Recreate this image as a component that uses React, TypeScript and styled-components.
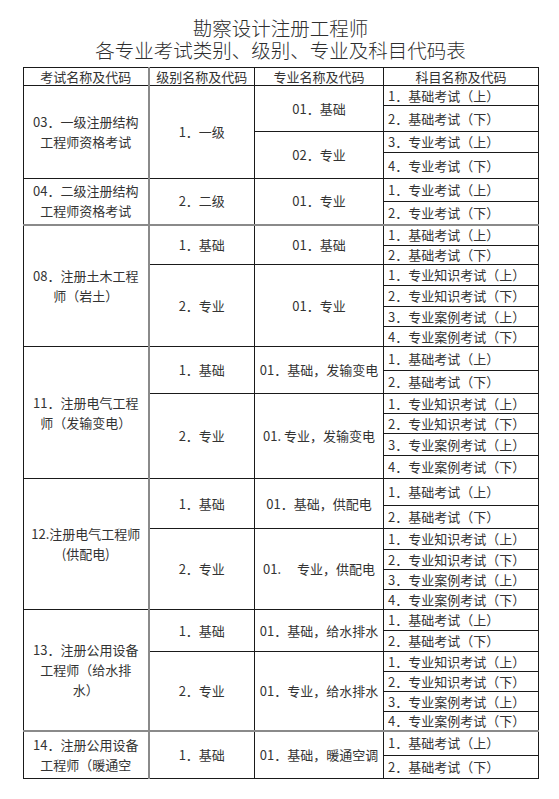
import React from "react";
import styled, { createGlobalStyle } from "styled-components";

const GlobalStyle = createGlobalStyle`
  html, body {
    margin: 0;
    padding: 0;
    background: #ffffff;
  }
  body {
    font-family: "Noto Sans CJK SC", "Noto Sans", sans-serif;
    color: #333333;
  }
`;

const Page = styled.div`
  width: 559px;
  box-sizing: border-box;
  padding: 17px 0 20px 23px;
`;

const Title = styled.h1`
  margin: 0 0 6px 0;
  width: 515px;
  text-align: center;
  font-family: "Noto Sans CJK SC", sans-serif;
  font-weight: 300;
  font-size: 19.5px;
  line-height: 22px;
  color: #2e2e2e;
`;

const TitleLine = styled.span`
  display: block;
  white-space: nowrap;
`;

const Table = styled.table`
  width: 515px;
  table-layout: fixed;
  border-collapse: collapse;
  font-family: "Noto Sans CJK SC", sans-serif;
  font-size: 13px;
  color: #333333;
`;

const Col = styled.col<{ $w: number }>`
  width: ${(p) => p.$w}px;
`;

const HeadRow = styled.tr`
  height: 18px;
`;

const HeadCell = styled.th<{ $sep?: boolean }>`
  font-weight: normal;
  font-size: 13px;
  line-height: 16px;
  padding: 0;
  text-align: center;
  white-space: nowrap;
  border: 1px solid #1a1a1a;
  ${(p) => (p.$sep ? "border-right: 2px solid #8a8a8a;" : "")}
`;

const Row = styled.tr<{ $h: number; $heavy?: boolean }>`
  height: ${(p) => p.$h}px;
  ${(p) => (p.$heavy ? "& > td { border-top: 2px solid #8a8a8a; }" : "")}
`;

const Cell = styled.td`
  border: 1px solid #1a1a1a;
  padding: 0 2px;
  white-space: nowrap;
  overflow: hidden;
  vertical-align: middle;
  line-height: 20px;
`;

const ExamCell = styled(Cell)`
  text-align: center;
  border-right: 2px solid #8a8a8a;
`;

const LevelCell = styled(Cell)`
  text-align: center;
`;

const MajorCell = styled(Cell)`
  text-align: center;
`;

const SubjectCell = styled(Cell)`
  text-align: left;
  padding-left: 4px;
  line-height: 18px;
`;

const ExamLine = styled.span`
  display: block;
`;

type Subject = { text: string; h: number };
type Major = { name: string; subjects: Subject[] };
type Level = { name: string; majors: Major[] };
type Group = { exam: string[]; levels: Level[]; heavyTop?: boolean };

const basic = (h1: number, h2: number): Subject[] => [
  { text: "1．基础考试（上）", h: h1 },
  { text: "2．基础考试（下）", h: h2 },
];

const prof = (a: number, b: number, c: number, d: number): Subject[] => [
  { text: "1．专业知识考试（上）", h: a },
  { text: "2．专业知识考试（下）", h: b },
  { text: "3．专业案例考试（上）", h: c },
  { text: "4．专业案例考试（下）", h: d },
];

const groups: Group[] = [
  {
    exam: ["03．一级注册结构", "工程师资格考试"],
    levels: [
      {
        name: "1．一级",
        majors: [
          { name: "01．基础", subjects: basic(20, 26) },
          {
            name: "02．专业",
            subjects: [
              { text: "3．专业考试（上）", h: 21 },
              { text: "4．专业考试（下）", h: 26 },
            ],
          },
        ],
      },
    ],
  },
  {
    exam: ["04．二级注册结构", "工程师资格考试"],
    levels: [
      {
        name: "2．二级",
        majors: [
          {
            name: "01．专业",
            subjects: [
              { text: "1．专业考试（上）", h: 23 },
              { text: "2．专业考试（下）", h: 23 },
            ],
          },
        ],
      },
    ],
  },
  {
    exam: ["08．注册土木工程", "师（岩土）"],
    heavyTop: true,
    levels: [
      { name: "1．基础", majors: [{ name: "01．基础", subjects: basic(21, 19) }] },
      { name: "2．专业", majors: [{ name: "01．专业", subjects: prof(21, 21, 20, 20) }] },
    ],
  },
  {
    exam: ["11．注册电气工程", "师（发输变电）"],
    levels: [
      { name: "1．基础", majors: [{ name: "01．基础，发输变电", subjects: basic(24, 23) }] },
      { name: "2．专业", majors: [{ name: "01.  专业，发输变电", subjects: prof(20, 20, 22, 23) }] },
    ],
  },
  {
    exam: ["12.注册电气工程师", "(供配电)"],
    levels: [
      { name: "1．基础", majors: [{ name: "01．基础，供配电", subjects: basic(27, 23) }] },
      { name: "2．专业", majors: [{ name: "01.　 专业，供配电", subjects: prof(21, 20, 20, 20) }] },
    ],
  },
  {
    exam: ["13．注册公用设备", "工程师（给水排", "水）"],
    levels: [
      { name: "1．基础", majors: [{ name: "01．基础，给水排水", subjects: basic(21, 21) }] },
      { name: "2．专业", majors: [{ name: "01．专业，给水排水", subjects: prof(20, 20, 20, 19) }] },
    ],
  },
  {
    exam: ["14．注册公用设备", "工程师（暖通空"],
    heavyTop: true,
    levels: [
      { name: "1．基础", majors: [{ name: "01．基础，暖通空调", subjects: basic(24, 23) }] },
    ],
  },
];

const countLevel = (l: Level) => l.majors.reduce((n, m) => n + m.subjects.length, 0);
const countGroup = (g: Group) => g.levels.reduce((n, l) => n + countLevel(l), 0);

function buildRows(): React.ReactNode[] {
  const rows: React.ReactNode[] = [];
  groups.forEach((g, gi) => {
    let firstInGroup = true;
    g.levels.forEach((l, li) => {
      let firstInLevel = true;
      l.majors.forEach((m, mi) => {
        m.subjects.forEach((s, si) => {
          rows.push(
            <Row key={`${gi}-${li}-${mi}-${si}`} $h={s.h} $heavy={firstInGroup && g.heavyTop}>
              {firstInGroup && (
                <ExamCell rowSpan={countGroup(g)}>
                  {g.exam.map((line, i) => (
                    <ExamLine key={i}>{line}</ExamLine>
                  ))}
                </ExamCell>
              )}
              {firstInLevel && <LevelCell rowSpan={countLevel(l)}>{l.name}</LevelCell>}
              {si === 0 && <MajorCell rowSpan={m.subjects.length}>{m.name}</MajorCell>}
              <SubjectCell>{s.text}</SubjectCell>
            </Row>
          );
          firstInGroup = false;
          firstInLevel = false;
        });
      });
    });
  });
  return rows;
}

export default function App() {
  return (
    <>
      <GlobalStyle />
      <Page>
        <Title>
          <TitleLine>勘察设计注册工程师</TitleLine>
          <TitleLine>各专业考试类别、级别、专业及科目代码表</TitleLine>
        </Title>
        <Table>
          <colgroup>
            <Col $w={125} />
            <Col $w={106} />
            <Col $w={129} />
            <Col $w={155} />
          </colgroup>
          <thead>
            <HeadRow>
              <HeadCell $sep>考试名称及代码</HeadCell>
              <HeadCell>级别名称及代码</HeadCell>
              <HeadCell>专业名称及代码</HeadCell>
              <HeadCell>科目名称及代码</HeadCell>
            </HeadRow>
          </thead>
          <tbody>{buildRows()}</tbody>
        </Table>
      </Page>
    </>
  );
}
